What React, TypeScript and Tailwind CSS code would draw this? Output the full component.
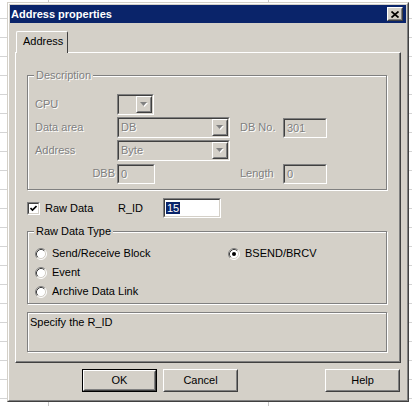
import type { ReactNode } from 'react';

const dis = "text-[#808080] [text-shadow:1px_1px_0_#fff]";
const etched = "border border-[#808080] shadow-[inset_1px_1px_0_#fff,1px_1px_0_#fff]";

function Sunken({ className = '', inner = '', children }: { className?: string; inner?: string; children?: ReactNode }) {
  return (
    <div className={`border border-t-[#808080] border-l-[#808080] border-r-white border-b-white ${className}`}>
      <div className={`h-full border border-t-[#404040] border-l-[#404040] border-r-[#d4d0c8] border-b-[#d4d0c8] ${inner}`}>
        {children}
      </div>
    </div>
  );
}

function Raised({ className = '', children }: { className?: string; children?: ReactNode }) {
  return (
    <div className={`border border-t-white border-l-white border-r-[#404040] border-b-[#404040] ${className}`}>
      <div className="h-full border border-t-[#d4d0c8] border-l-[#d4d0c8] border-r-[#808080] border-b-[#808080] flex items-center justify-center">
        {children}
      </div>
    </div>
  );
}

function Combo({ w, value }: { w: string; value?: string }) {
  return (
    <Sunken className={`${w} h-[21px]`} inner="flex bg-[#d4d0c8]">
      <span className={`flex-1 pl-[2px] leading-[17px] ${dis}`}>{value}</span>
      <Raised className="w-[16px] h-full">
        <svg width="8" height="5" viewBox="0 0 8 5">
          <path d="M1 1h7l-3.5 4z" fill="#fff" />
          <path d="M0 0h7l-3.5 4z" fill="#808080" />
        </svg>
      </Raised>
    </Sunken>
  );
}

function Field({ w, value }: { w: string; value: string }) {
  return (
    <Sunken className={`${w} h-[20px]`} inner="bg-[#d4d0c8] pl-[2px] leading-[16px]">
      <span className={dis}>{value}</span>
    </Sunken>
  );
}

function Radio({ checked, label }: { checked?: boolean; label: string }) {
  return (
    <div className="flex items-center gap-[5px] h-[19px]">
      <svg width="12" height="12" viewBox="0 0 12 12">
        <circle cx="6" cy="6" r="5" fill="#fff" />
        <path d="M2.11 9.89A5.5 5.5 0 0 1 9.89 2.11" fill="none" stroke="#808080" />
        <path d="M9.89 2.11A5.5 5.5 0 0 1 2.11 9.89" fill="none" stroke="#fff" />
        <path d="M2.82 9.18A4.5 4.5 0 0 1 9.18 2.82" fill="none" stroke="#404040" />
        <path d="M9.18 2.82A4.5 4.5 0 0 1 2.82 9.18" fill="none" stroke="#d4d0c8" />
        {checked && <circle cx="6" cy="6" r="2" fill="#000" />}
      </svg>
      <span>{label}</span>
    </div>
  );
}

export default function App() {
  return (
    <div className="w-[412px] h-[406px] overflow-hidden pl-[7px] pt-[2px] bg-white bg-[image:linear-gradient(to_right,transparent_48px,#c8c8c8_48px,#c8c8c8_49px,transparent_49px),linear-gradient(to_right,transparent_268px,#c8c8c8_268px,#c8c8c8_269px,transparent_269px),repeating-linear-gradient(to_bottom,transparent_0px,transparent_18px,#d4d4d4_18px,#d4d4d4_19px)] font-['Liberation_Sans',Arial,sans-serif] text-[11px] leading-[13px] text-black">
      <div className="w-[402px] h-[400px] border border-t-[#d4d0c8] border-l-[#d4d0c8] border-r-[#404040] border-b-[#404040]">
        <div className="h-full border border-t-white border-l-white border-r-[#808080] border-b-[#808080] bg-[#d4d0c8] p-px">
          {/* title bar */}
          <div className="h-[18px] bg-[#0a246a] flex items-center justify-between pl-[1px] pr-[3px]">
            <span className="text-white font-bold text-[11px]">Address properties</span>
            <Raised className="w-[16px] h-[14px] bg-[#d4d0c8]">
              <svg width="8" height="7" viewBox="0 0 8 7">
                <path d="M0.5 0.5l7 6M7.5 0.5l-7 6" stroke="#000" strokeWidth="1.7" />
              </svg>
            </Raised>
          </div>

          <div className="pl-[5px] pt-[8px]">
            {/* tab */}
            <div className="flex pl-[1px]">
              <div className="relative z-10 h-[22px] w-[52px] bg-[#d4d0c8] border-t border-l border-t-white border-l-white border-r border-r-[#404040] rounded-t-[2px] pl-[6px] pt-[3px]">
                Address
              </div>
            </div>
            <div className="-mt-px w-[386px] h-[311px] border border-t-white border-l-white border-r-[#404040] border-b-[#404040]">
              <div className="h-full border-r border-b border-r-[#808080] border-b-[#808080] pl-[11px] pt-[22px]">
                {/* Description group */}
                <div className={`relative w-[360px] h-[115px] ${etched} pl-[7px] pt-[18px] flex flex-col gap-[2px]`}>
                  <span className={`absolute left-[6px] -top-[7px] bg-[#d4d0c8] px-[2px] ${dis}`}>Description</span>
                  <div className="flex items-center h-[21px]">
                    <span className={`w-[82px] ${dis}`}>CPU</span>
                    <Combo w="w-[37px]" />
                  </div>
                  <div className="flex items-center h-[21px]">
                    <span className={`w-[82px] ${dis}`}>Data area</span>
                    <Combo w="w-[113px]" value="DB" />
                    <span className={`ml-[10px] w-[43px] ${dis}`}>DB No.</span>
                    <Field w="w-[44px]" value="301" />
                  </div>
                  <div className="flex items-center h-[21px]">
                    <span className={`w-[82px] ${dis}`}>Address</span>
                    <Combo w="w-[113px]" value="Byte" />
                  </div>
                  <div className="flex items-center h-[21px]">
                    <span className={`w-[80px] text-right mr-[2px] ${dis}`}>DBB</span>
                    <Field w="w-[38px]" value="0" />
                    <span className={`ml-[85px] w-[43px] ${dis}`}>Length</span>
                    <Field w="w-[44px]" value="0" />
                  </div>
                </div>

                {/* Raw data row */}
                <div className="mt-[8px] h-[20px] flex items-center">
                  <div className="w-[91px] flex items-center gap-[5px]">
                    <Sunken className="w-[13px] h-[13px]" inner="bg-white flex items-center justify-center">
                      <svg width="7" height="7" viewBox="0 0 7 7">
                        <path d="M0.5 3l2 2 4-4" fill="none" stroke="#000" strokeWidth="1.6" />
                      </svg>
                    </Sunken>
                    <span>Raw Data</span>
                  </div>
                  <span className="w-[45px]">R_ID</span>
                  <Sunken className="w-[58px] h-[20px]" inner="bg-white pl-px pt-[2px]">
                    <span className="bg-[#0a246a] text-white px-px">15</span>
                  </Sunken>
                </div>

                {/* Raw Data Type group */}
                <div className={`relative mt-[13px] w-[360px] h-[73px] ${etched} pl-[7px] pt-[12px] flex`}>
                  <span className="absolute left-[6px] -top-[7px] bg-[#d4d0c8] px-[2px]">Raw Data Type</span>
                  <div className="w-[193px] flex flex-col">
                    <Radio label="Send/Receive Block" />
                    <Radio label="Event" />
                    <Radio label="Archive Data Link" />
                  </div>
                  <div className="flex flex-col">
                    <Radio checked label="BSEND/BRCV" />
                  </div>
                </div>

                {/* status */}
                <div className={`mt-[8px] w-[360px] h-[40px] ${etched} pl-[2px] pt-[3px]`}>
                  Specify the R_ID
                </div>
              </div>
            </div>

            {/* buttons */}
            <div className="mt-[6px] flex pl-[67px]">
              <div className="w-[75px] h-[23px] border border-black">
                <Raised className="h-full">OK</Raised>
              </div>
              <Raised className="ml-[6px] w-[75px] h-[23px]">Cancel</Raised>
              <Raised className="ml-[87px] w-[75px] h-[23px]">Help</Raised>
            </div>
          </div>
        </div>
      </div>
    </div>
  );
}
